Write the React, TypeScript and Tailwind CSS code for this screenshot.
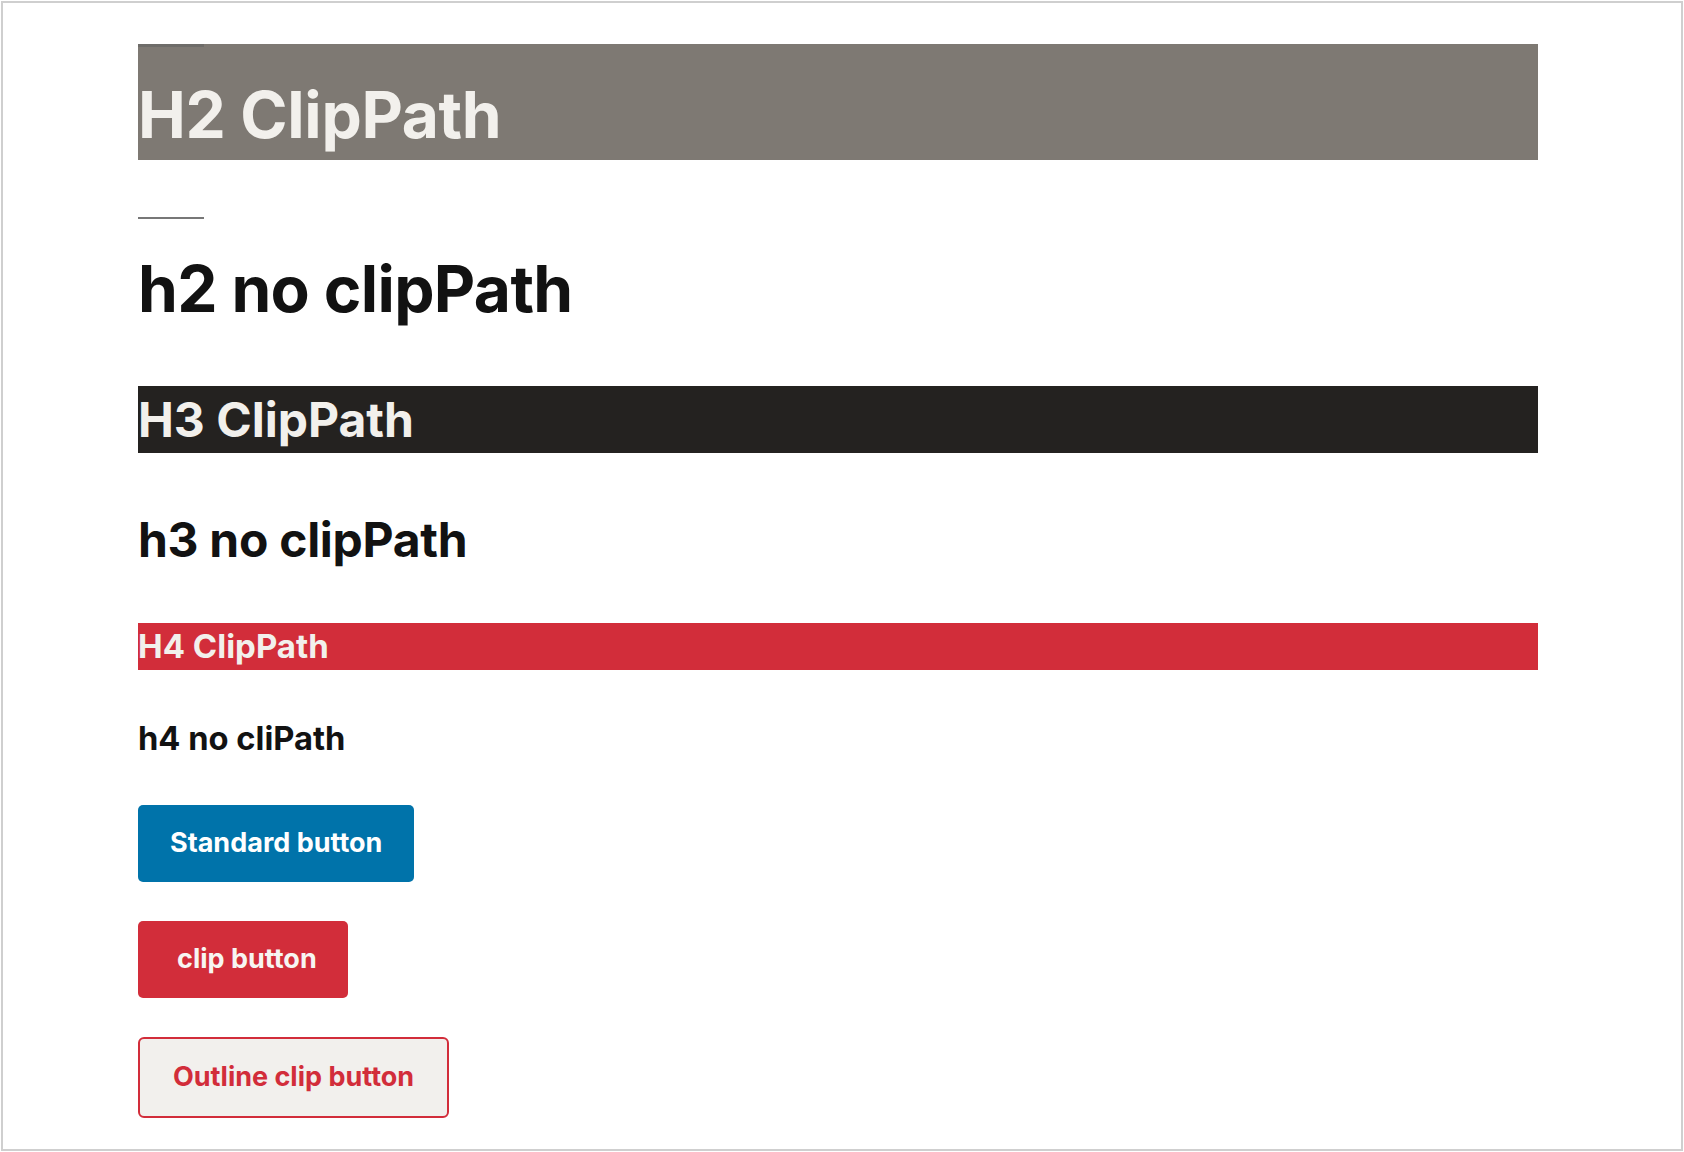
const font = { fontFamily: "Inter, 'Noto Sans', sans-serif" };

function ClipHeading({ children, level, className }: { children: string; level: 2 | 3 | 4; className: string }) {
  const Tag = `h${level}` as "h2" | "h3" | "h4";
  return <Tag className={className}>{children}</Tag>;
}

export default function App() {
  return (
    <div className="h-screen w-full bg-white p-px" style={font}>
      <div className="h-full border-2 border-[#cfcfcf] bg-white">
        <main className="ml-[135px] w-[1400px] pt-[41px]">
          <div className="bg-[#7e7973]">
            <div className="h-[3px] w-[66px] bg-[#6e6c69]" />
            <ClipHeading level={2} className="mt-[23px] text-[64px] font-bold leading-[1.4] tracking-[-0.005em] text-[#f2f0ec]">
              H2 ClipPath
            </ClipHeading>
          </div>

          <hr className="mt-[57px] h-[2px] w-[66px] border-0 bg-[#777777]" />

          <h2 className="mt-[25px] text-[64px] font-bold leading-[1.4] tracking-[-0.01em] text-[#121212]">h2 no clipPath</h2>

          <ClipHeading level={3} className="mt-[53px] bg-[#242220] text-[48px] font-bold leading-[1.4] text-[#f2f0ec]">
            H3 ClipPath
          </ClipHeading>

          <h3 className="mt-[53px] text-[48px] font-bold leading-[1.4] tracking-[-0.006em] text-[#121212]">h3 no clipPath</h3>

          <ClipHeading level={4} className="mt-[49px] bg-[#d22d3a] text-[33px] font-bold leading-[47px] text-[#f2f0ec]">
            H4 ClipPath
          </ClipHeading>

          <h4 className="mt-[46px] text-[32.7px] font-bold leading-[45px] text-[#121212]">h4 no cliPath</h4>

          <div className="mt-[44px] flex flex-col items-start gap-[39px]">
            <button type="button" className="h-[77px] rounded-[5px] bg-[#0073aa] px-[32px] text-[27px] font-bold text-white">
              Standard button
            </button>
            <button type="button" className="h-[77px] rounded-[5px] bg-[#d22d3a] pl-[39px] pr-[31px] text-[27px] font-bold text-[#f7f5f2]">
              clip button
            </button>
            <button
              type="button"
              className="h-[81px] rounded-[6px] border-2 border-[#d22d3a] bg-[#f2f0ed] px-[33px] text-[27px] font-bold text-[#d22d3a]"
            >
              Outline clip button
            </button>
          </div>
        </main>
      </div>
    </div>
  );
}
